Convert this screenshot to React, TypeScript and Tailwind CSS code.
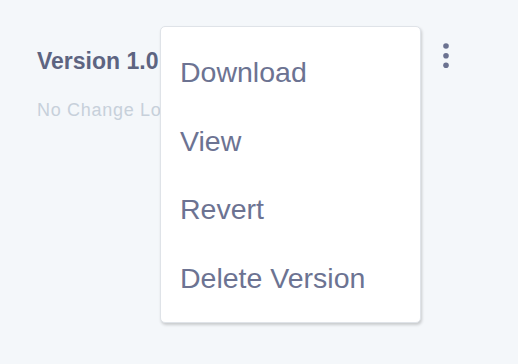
import React from "react";

export default function App() {
  const items = ["Download", "View", "Revert", "Delete Version"];
  return (
    <div
      className="relative w-[518px] h-[364px] bg-[#f4f7fa] overflow-hidden"
      style={{ fontFamily: '"Liberation Sans", Arial, sans-serif' }}
    >
      <div className="pt-[48px] pl-[37px]">
        <div className="flex items-start justify-between w-[413px]">
          <div className="text-[23px] leading-[27px] font-bold text-[#5d6481]">
            Version 1.0
          </div>
          <svg width="8" height="26" viewBox="0 0 8 26" className="mt-[-5px]">
            <circle cx="4" cy="3" r="2.8" fill="#6b7290" />
            <circle cx="4" cy="12.7" r="2.8" fill="#6b7290" />
            <circle cx="4" cy="22.3" r="2.8" fill="#6b7290" />
          </svg>
        </div>
        <div className="mt-[25px] text-[18px] leading-[20px] tracking-[0.7px] text-[#c7d0da]">
          No Change Log
        </div>
      </div>

      <div className="absolute left-[160px] top-[26px] w-[261px] bg-white border border-[#dfe3e8] rounded-[5px] shadow-[1px_2px_3px_rgba(0,0,0,0.18)] pt-[11px] pb-[10px]">
        {items.map((t) => (
          <div
            key={t}
            className="h-[68.5px] leading-[68.5px] pl-[19px] text-[28.5px] text-[#6c7392]"
          >
            {t}
          </div>
        ))}
      </div>
    </div>
  );
}
